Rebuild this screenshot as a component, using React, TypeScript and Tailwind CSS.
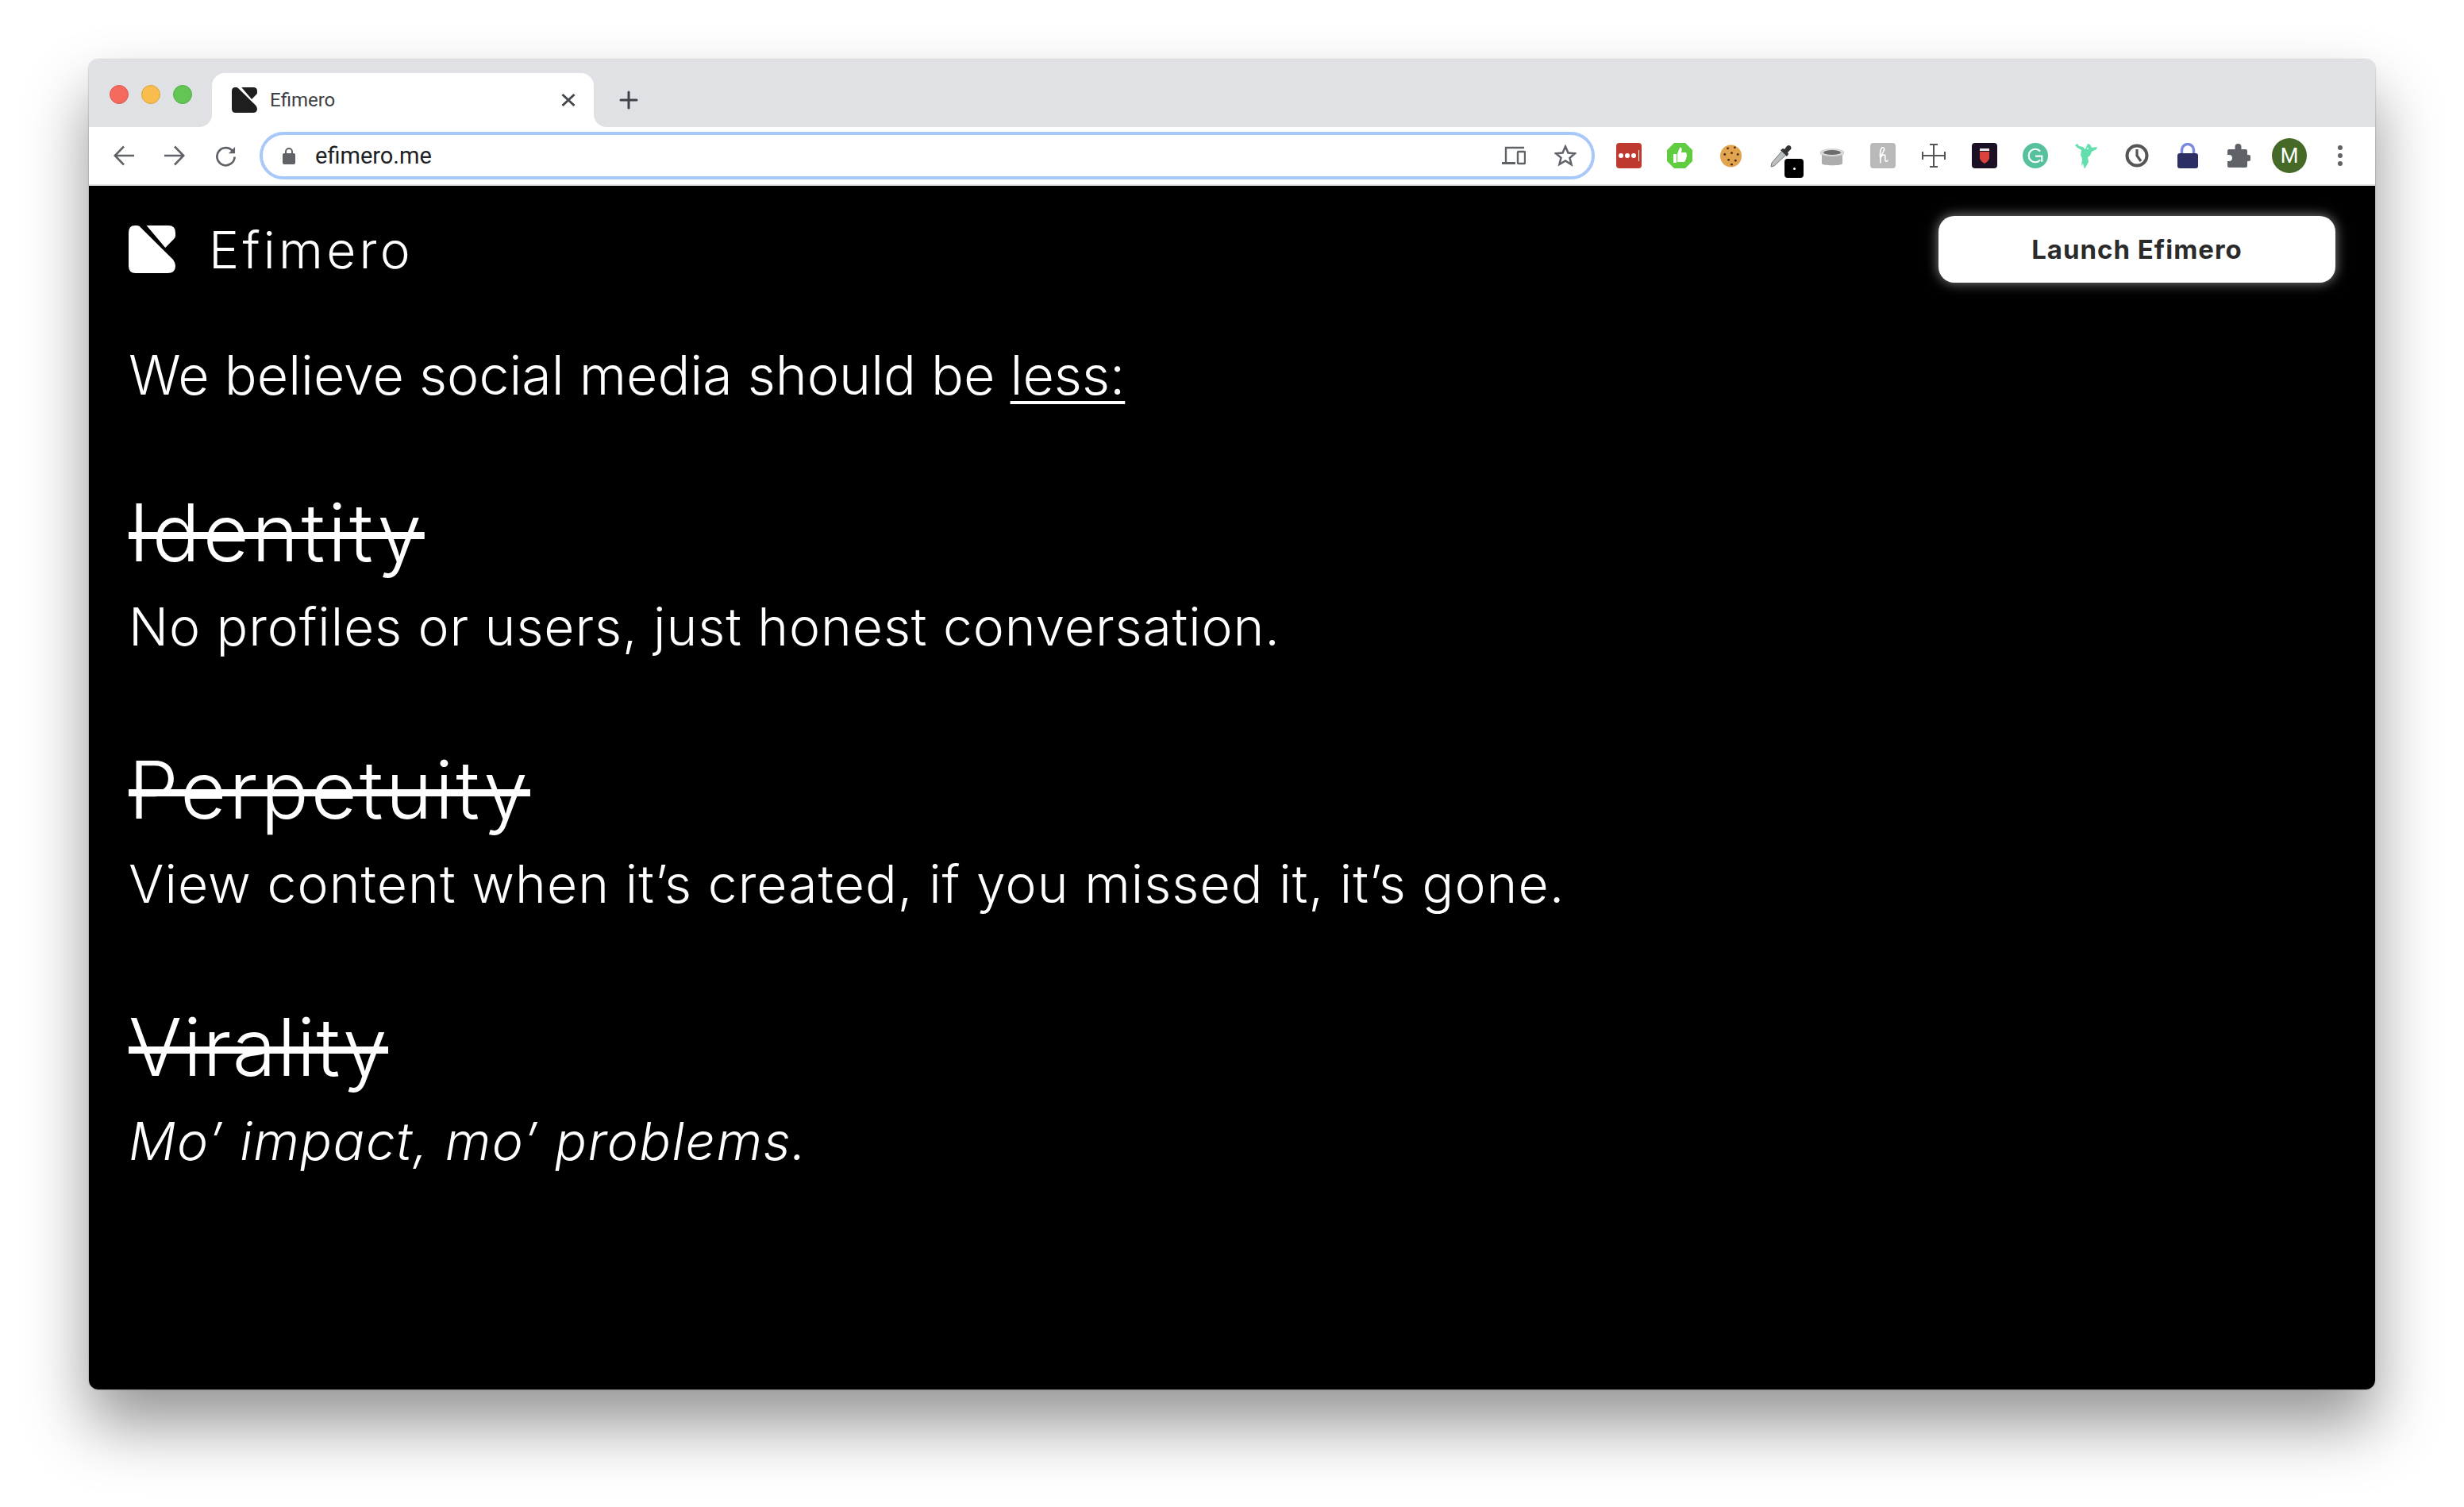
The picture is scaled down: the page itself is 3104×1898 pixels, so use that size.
const Logo = ({ className, fill }: { className: string; fill: string }) => (
  <svg viewBox="0 0 60 60" preserveAspectRatio="none" className={className}>
    <path fill={fill} d="M8 0H11Q14 0 16 3L57 43Q60 47 60 51Q60 60 50 60H9Q0 60 0 51V9Q0 0 8 0Z" />
    <path fill={fill} d="M23 0H51Q60 0 60 9V13Q60 15 58 17L47 28Z" />
  </svg>
);

const Slot = ({ children }: { children: React.ReactNode }) => (
  <div className="relative flex h-16 w-16 shrink-0 items-center justify-center">{children}</div>
);

const Section = ({ title, children, titleClass, bodyClass }: { title: string; children: string; titleClass: string; bodyClass: string }) => (
  <section>
    <h2 className={`text-[100px] font-light leading-[120px] line-through decoration-[9px] ${titleClass}`}>{title}</h2>
    <p className={`mt-[18px] text-[66px] font-[350] leading-[80px] ${bodyClass}`}>{children}</p>
  </section>
);

export default function App() {
  return (
    <div className="min-h-[1898px] w-full bg-white pl-[112px] pt-[75px]">
      <div className="flex h-[1675px] w-[2880px] flex-col overflow-hidden rounded-xl shadow-[0_44px_80px_rgba(0,0,0,0.42),0_0_2px_rgba(0,0,0,0.4)]" style={{ fontFamily: "Inter, sans-serif" }}>
        <div className="flex h-[85px] shrink-0 items-end bg-[#dfe1e5]">
          <div className="flex h-[68px] w-[155px] shrink-0 gap-4 pl-[26px] pt-[15px]">
            <span className="h-6 w-6 rounded-full border border-[#dc5a50] bg-[#f46a5e]" />
            <span className="h-6 w-6 rounded-full border border-[#d9a53c] bg-[#f8bd4c]" />
            <span className="h-6 w-6 rounded-full border border-[#4fb044] bg-[#62c554]" />
          </div>
          <div className="relative flex h-[68px] w-[481px] items-center rounded-t-2xl bg-white pl-[25px] pr-[22px]">
            <span className="absolute -left-4 bottom-0 h-4 w-4 bg-white"><span className="block h-4 w-4 rounded-br-2xl bg-[#dfe1e5]" /></span>
            <span className="absolute -right-4 bottom-0 h-4 w-4 bg-white"><span className="block h-4 w-4 rounded-bl-2xl bg-[#dfe1e5]" /></span>
            <Logo className="h-8 w-8" fill="#1e1e1e" />
            <span className="ml-4 flex-1 text-[24px] leading-none text-[#3c4043]" style={{ fontFamily: "Roboto, sans-serif" }}>Efimero</span>
            <svg viewBox="0 0 20 20" className="h-5 w-5" stroke="#45484c" strokeWidth="3" fill="none"><path d="M2.500 3l15 14M17.500 3l-15 14" /></svg>
          </div>
          <svg viewBox="0 0 24 24" className="mb-[22px] ml-[32px] h-6 w-6" stroke="#3f4246" strokeWidth="3" fill="none" strokeLinecap="round"><path d="M12 2v20M2 12h20" /></svg>
        </div>

        <div className="flex h-[74px] shrink-0 items-center border-b-2 border-[#e3e4e6] bg-white pl-3 pr-3">
          <Slot><svg viewBox="0 0 26 26" className="h-[26px] w-[26px]" stroke="#5f6368" strokeWidth="2.6" fill="none"><path d="M26 13H2M13 1.5L1.8 13 13 24.5" /></svg></Slot>
          <Slot><svg viewBox="0 0 26 26" className="h-[26px] w-[26px]" stroke="#5f6368" strokeWidth="2.6" fill="none"><path d="M0 13h24M13 1.5L24.2 13 13 24.5" /></svg></Slot>
          <Slot><svg viewBox="0 0 28 28" className="h-[27px] w-[27px]" stroke="#5f6368" strokeWidth="2.8" fill="none"><path d="M23 7.5A11.5 11.5 0 1 0 25.5 15" /><path d="M26 2v8.5h-8.5z" fill="#5f6368" stroke="none" /></svg></Slot>
          <div className="ml-[11px] flex h-[60px] w-[1682px] items-center rounded-full border-4 border-[#a8c7fa] pl-[25px]">
            <svg viewBox="0 0 16 21" className="h-[21px] w-4"><rect y="7" width="16" height="14" rx="2" fill="#5f6368" /><path d="M4 8V5a4 4 0 0 1 8 0v3" fill="none" stroke="#5f6368" strokeWidth="2" /></svg>
            <span className="ml-[25px] flex-1 text-[29px] leading-none text-[#202124]" style={{ fontFamily: "Roboto, sans-serif" }}>efimero.me</span>
            <svg viewBox="0 0 30 24" className="mr-[36px] h-6 w-[30px]" fill="none" stroke="#5f6368" strokeWidth="2.4"><path d="M28 2H5v18" /><path d="M0 21.500h17" strokeWidth="3" /><rect x="20" y="7" width="9" height="15" rx="1" /></svg>
            <svg viewBox="0 0 28 28" className="mr-[19px] h-7 w-7" fill="none" stroke="#5f6368" strokeWidth="2.5" strokeLinejoin="miter"><path d="M14 2.500l3.500 8 8.500.8-6.500 5.600 2 8.400L14 20.500 6.500 25l2-8.400L2 11.300l8.500-.8z" /></svg>
          </div>
          <div className="ml-[11px] flex">
            <Slot>
              <div className="flex h-8 w-8 items-center justify-center gap-[2px] rounded-sm bg-[#c0392f]">
                <i className="h-[6px] w-[6px] rounded-full bg-white" /><i className="h-[6px] w-[6px] rounded-full bg-white" /><i className="h-[6px] w-[6px] rounded-full bg-white" /><i className="ml-[1px] h-[14px] w-[1px] bg-white" />
              </div>
            </Slot>
            <Slot>
              <svg viewBox="0 0 32 32" className="h-8 w-8"><path fill="#5fcd3f" d="M9 0h14l9 9v14l-9 9H9l-9-9V9z" /><path fill="#fff" d="M8 14h4v11H8zM13 14l3-8c2-1 3 1 2.500 3l-.5 3h5c2 0 2 2 1.500 3 1 1 .5 3-.5 3.500.5 1.500 0 2.500-1 3 .2 1.500-.5 2.500-2 2.500h-8z" /></svg>
            </Slot>
            <Slot>
              <svg viewBox="0 0 30 30" className="h-[29px] w-[29px]"><ellipse cx="15" cy="15" rx="14" ry="14.500" fill="#e2a44f" /><g fill="#4b2d17"><circle cx="11" cy="5" r="1.500" /><circle cx="20" cy="4" r="1.500" /><circle cx="7" cy="13" r="1.500" /><circle cx="16" cy="11" r="1.500" /><circle cx="24" cy="13" r="1.500" /><circle cx="12" cy="20" r="1.500" /><circle cx="21" cy="21" r="1.500" /><circle cx="16" cy="26" r="1.500" /></g></svg>
            </Slot>
            <Slot>
              <svg viewBox="0 0 30 30" className="h-[30px] w-[30px]"><path d="M16 9l5 5L6 28l-4 1 1-5z" fill="#b9bdc0" stroke="#777" strokeWidth="1" /><path d="M14 8l8 8 2-3-1-2 4-4c2-3-2-7-5-4l-3 4-2-1z" fill="#333" /></svg>
              <span className="absolute left-[36px] top-[36px] flex h-6 w-6 items-center justify-center rounded-[4px] bg-black"><i className="h-[3px] w-[3px] rounded-full bg-white" /></span>
            </Slot>
            <Slot>
              <svg viewBox="0 0 32 24" className="mt-[4px] h-6 w-8"><path d="M1 5h30v3l-2 1v11c0 3-26 3-26 0V9L1 8z" fill="#adadad" /><ellipse cx="16" cy="6" rx="15.500" ry="5" fill="#d8d8d8" /><ellipse cx="16" cy="6" rx="11" ry="3" fill="#6c6c6c" /></svg>
            </Slot>
            <Slot>
              <div className="flex h-8 w-8 items-center justify-center rounded-[4px] bg-[#b9b9b9]">
                <svg viewBox="0 0 16 24" className="h-6 w-4" fill="none" stroke="#fff" strokeWidth="1.600" strokeLinecap="round"><path d="M5 21C5 13 3 8 6 3c2-3 5 0 3 3-2 4-4 7-4 9 1-3 3-4 5-4 2 1 0 5 1 7 .5 2 2 1 3 0" /></svg>
              </div>
            </Slot>
            <Slot>
              <svg viewBox="0 0 30 30" className="h-[30px] w-[30px]" fill="none" stroke="#555" strokeWidth="2"><path d="M15 0v30M10 1h10M10 29h10M1 15h28M1 10v10M29 10v10" /></svg>
            </Slot>
            <Slot>
              <div className="flex h-8 w-8 items-center justify-center rounded-[4px] bg-[#1c1024]">
                <svg viewBox="0 0 20 24" className="h-6 w-5"><path d="M4 3h12v3H4z" fill="#e9e9e9" /><path d="M4 7h12v7c0 4-3 6-6 8-3-2-6-4-6-8z" fill="#d9423c" /></svg>
              </div>
            </Slot>
            <Slot>
              <div className="flex h-8 w-8 items-center justify-center rounded-full bg-[#55c19d]">
                <svg viewBox="0 0 20 20" className="h-[22px] w-[22px]" fill="none" stroke="#fff" strokeWidth="2"><path d="M15.500 5A7.500 7.500 0 1 0 15.500 15" /><path d="M10 10.500h7.500V17" /></svg>
              </div>
            </Slot>
            <Slot>
              <svg viewBox="0 0 30 32" className="h-8 w-[30px]"><path fill="#62dfac" d="M1 3l3-2 2 3 5 1 3 3 3-7 3 1 2 4 7-1-1 3-6 3-2 5-3 2 1 6-5 9-2-7-2 4 1-10-2-5 1-6-5-3z" /><circle cx="17" cy="7" r="1" fill="#fff" /></svg>
            </Slot>
            <Slot>
              <svg viewBox="0 0 30 30" className="h-[30px] w-[30px]" fill="none" stroke="#555" strokeWidth="4"><circle cx="15" cy="15" r="12.500" /><path d="M15 7v8l5 7" strokeWidth="3.200" /></svg>
            </Slot>
            <Slot>
              <svg viewBox="0 0 26 32" className="h-8 w-[26px]"><path d="M5.500 14V9a7.500 7.500 0 0 1 15 0v5" fill="none" stroke="#7b8ae0" strokeWidth="3.500" /><rect y="13" width="26" height="19" rx="3" fill="#2d2e63" /></svg>
            </Slot>
            <Slot>
              <svg viewBox="0 0 30 30" className="h-[30px] w-[30px]"><path fill="#5f6368" d="M3 7h7.500V4a4 4 0 0 1 8 0v3H24a2 2 0 0 1 2 2v5h1a4 4 0 0 1 0 8h-1v6a2 2 0 0 1-2 2H3a2 2 0 0 1-2-2v-6h2a4 4 0 0 0 0-8H1V9a2 2 0 0 1 2-2z" /></svg>
            </Slot>
            <Slot>
              <div className="flex h-11 w-11 items-center justify-center rounded-full bg-[#456a27] text-[26px] text-white" style={{ fontFamily: "Roboto, sans-serif" }}>M</div>
            </Slot>
            <Slot>
              <div className="flex flex-col gap-1">
                <i className="h-[6px] w-[6px] rounded-full bg-[#5f6368]" /><i className="h-[6px] w-[6px] rounded-full bg-[#5f6368]" /><i className="h-[6px] w-[6px] rounded-full bg-[#5f6368]" />
              </div>
            </Slot>
          </div>
        </div>

        <main className="flex-1 bg-black px-[50px] pt-[38px] text-white">
          <header className="flex h-[84px] items-center justify-between">
            <div className="flex items-center">
              <Logo className="h-[60px] w-[59px]" fill="#ffffff" />
              <span className="ml-[42px] mt-[2px] text-[64px] font-light leading-none tracking-[4.300px]">Efimero</span>
            </div>
            <button className="h-[84px] w-[500px] rounded-[20px] bg-white pt-[2px] text-[33px] font-bold tracking-[1px] text-[#2b2b2b] shadow-[0_0_16px_rgba(255,255,255,0.55)]">Launch Efimero</button>
          </header>
          <p className="mt-[76px] text-[68px] font-[350] leading-[80px] tracking-[0px]">We believe social media should be <span className="underline decoration-[4px] underline-offset-[8px]">less:</span></p>
          <div className="mt-[99px] flex flex-col gap-[106px]">
            <Section title="Identity" titleClass="tracking-[3.600px]" bodyClass="tracking-[0.900px]">No profiles or users, just honest conversation.</Section>
            <Section title="Perpetuity" titleClass="tracking-[3.100px]" bodyClass="tracking-[1.050px]">View content when it’s created, if you missed it, it’s gone.</Section>
            <Section title="Virality" titleClass="tracking-[1.400px]" bodyClass="italic tracking-[1.500px]">Mo’ impact, mo’ problems.</Section>
          </div>
        </main>
      </div>
    </div>
  );
}
